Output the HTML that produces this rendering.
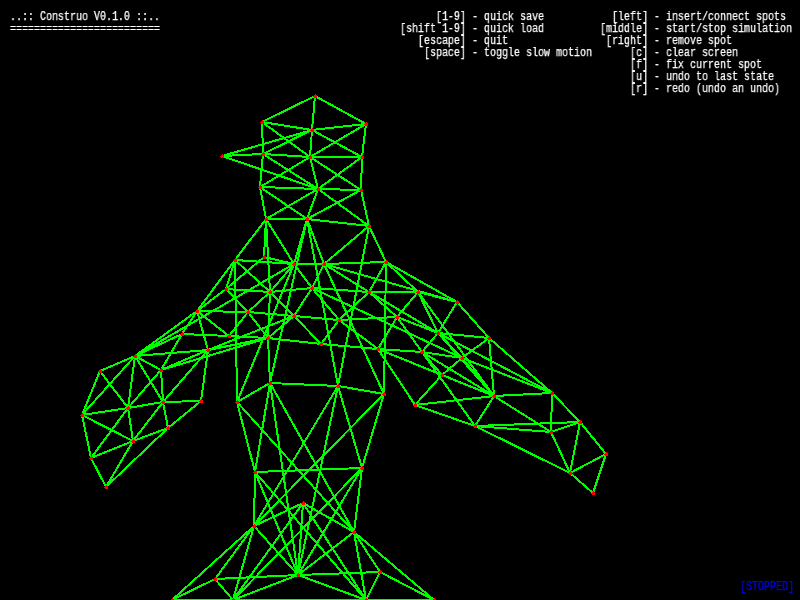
<!DOCTYPE html>
<html><head><meta charset="utf-8"><title>Construo</title>
<style>
html,body{margin:0;padding:0;background:#000;overflow:hidden}
body{width:800px;height:600px;position:relative;font-family:"Liberation Mono","DejaVu Sans Mono",monospace;font-size:12px;line-height:12px;color:#fff}
pre{margin:0;position:absolute;font:inherit;white-space:pre;letter-spacing:0;transform:scaleX(0.8333) translateZ(0);transform-origin:0 0;will-change:transform;-webkit-text-stroke:0.25px currentColor}
#title{left:10px;top:11px}
#help1{left:400px;top:11px}
#help2{left:600px;top:11px}
#status{left:740px;top:581px;color:#0000ff}
svg{position:absolute;left:0;top:0}
</style></head><body>
<svg width="800" height="600" viewBox="0 0 800 600" shape-rendering="crispEdges">
<g stroke="#0f0" stroke-width="2" fill="none"><line x1="315" y1="96" x2="262" y2="122"/><line x1="315" y1="96" x2="366" y2="124"/><line x1="315" y1="96" x2="312" y2="130"/><line x1="262" y1="122" x2="312" y2="130"/><line x1="262" y1="122" x2="310" y2="157"/><line x1="262" y1="122" x2="263" y2="154"/><line x1="366" y1="124" x2="312" y2="130"/><line x1="366" y1="124" x2="310" y2="157"/><line x1="366" y1="124" x2="362" y2="157"/><line x1="312" y1="130" x2="310" y2="157"/><line x1="312" y1="130" x2="263" y2="154"/><line x1="312" y1="130" x2="222" y2="156"/><line x1="312" y1="130" x2="362" y2="157"/><line x1="222" y1="156" x2="263" y2="154"/><line x1="222" y1="156" x2="318" y2="189"/><line x1="263" y1="154" x2="310" y2="157"/><line x1="263" y1="154" x2="260" y2="187"/><line x1="263" y1="154" x2="318" y2="189"/><line x1="310" y1="157" x2="362" y2="157"/><line x1="310" y1="157" x2="260" y2="187"/><line x1="310" y1="157" x2="318" y2="189"/><line x1="310" y1="157" x2="361" y2="190"/><line x1="362" y1="157" x2="318" y2="189"/><line x1="362" y1="157" x2="361" y2="190"/><line x1="260" y1="187" x2="318" y2="189"/><line x1="260" y1="187" x2="266" y2="219"/><line x1="260" y1="187" x2="307" y2="219"/><line x1="318" y1="189" x2="361" y2="190"/><line x1="318" y1="189" x2="266" y2="219"/><line x1="318" y1="189" x2="307" y2="219"/><line x1="318" y1="189" x2="369" y2="226"/><line x1="361" y1="190" x2="369" y2="226"/><line x1="361" y1="190" x2="307" y2="219"/><line x1="266" y1="219" x2="307" y2="219"/><line x1="307" y1="219" x2="369" y2="226"/><line x1="266" y1="219" x2="235" y2="260"/><line x1="266" y1="219" x2="264" y2="257"/><line x1="266" y1="219" x2="270" y2="292"/><line x1="266" y1="219" x2="294" y2="264"/><line x1="307" y1="219" x2="294" y2="264"/><line x1="307" y1="219" x2="324" y2="264"/><line x1="235" y1="260" x2="294" y2="264"/><line x1="264" y1="257" x2="294" y2="264"/><line x1="264" y1="257" x2="226" y2="289"/><line x1="235" y1="260" x2="226" y2="289"/><line x1="235" y1="260" x2="237" y2="402"/><line x1="235" y1="260" x2="270" y2="292"/><line x1="270" y1="292" x2="294" y2="316"/><line x1="235" y1="260" x2="197" y2="311"/><line x1="294" y1="264" x2="270" y2="292"/><line x1="294" y1="264" x2="135" y2="356"/><line x1="270" y1="292" x2="248" y2="312"/><line x1="226" y1="289" x2="270" y2="292"/><line x1="226" y1="289" x2="248" y2="312"/><line x1="226" y1="289" x2="197" y2="311"/><line x1="197" y1="311" x2="248" y2="312"/><line x1="197" y1="311" x2="229" y2="336"/><line x1="197" y1="311" x2="208" y2="350"/><line x1="197" y1="311" x2="182" y2="334"/><line x1="197" y1="311" x2="135" y2="356"/><line x1="182" y1="334" x2="229" y2="336"/><line x1="182" y1="334" x2="135" y2="356"/><line x1="182" y1="334" x2="161" y2="370"/><line x1="248" y1="312" x2="229" y2="336"/><line x1="208" y1="350" x2="135" y2="356"/><line x1="135" y1="356" x2="100" y2="371"/><line x1="135" y1="356" x2="161" y2="370"/><line x1="135" y1="356" x2="128" y2="408"/><line x1="135" y1="356" x2="163" y2="402"/><line x1="135" y1="356" x2="82" y2="415"/><line x1="100" y1="371" x2="82" y2="415"/><line x1="100" y1="371" x2="128" y2="408"/><line x1="161" y1="370" x2="163" y2="402"/><line x1="161" y1="370" x2="128" y2="408"/><line x1="163" y1="402" x2="201" y2="401"/><line x1="163" y1="402" x2="128" y2="408"/><line x1="163" y1="402" x2="168" y2="428"/><line x1="163" y1="402" x2="133" y2="441"/><line x1="201" y1="401" x2="168" y2="428"/><line x1="168" y1="428" x2="106" y2="487"/><line x1="128" y1="408" x2="82" y2="415"/><line x1="128" y1="408" x2="133" y2="441"/><line x1="128" y1="408" x2="91" y2="458"/><line x1="82" y1="415" x2="91" y2="458"/><line x1="82" y1="415" x2="133" y2="441"/><line x1="133" y1="441" x2="91" y2="458"/><line x1="133" y1="441" x2="106" y2="487"/><line x1="133" y1="441" x2="168" y2="428"/><line x1="91" y1="458" x2="106" y2="487"/><line x1="208" y1="350" x2="163" y2="402"/><line x1="208" y1="350" x2="201" y2="401"/><line x1="494" y1="396" x2="552" y2="393"/><line x1="494" y1="396" x2="475" y2="426"/><line x1="494" y1="396" x2="551" y2="432"/><line x1="552" y1="393" x2="551" y2="432"/><line x1="552" y1="393" x2="580" y2="422"/><line x1="475" y1="426" x2="551" y2="432"/><line x1="475" y1="426" x2="580" y2="422"/><line x1="475" y1="426" x2="570" y2="473"/><line x1="551" y1="432" x2="580" y2="422"/><line x1="551" y1="432" x2="570" y2="473"/><line x1="580" y1="422" x2="570" y2="473"/><line x1="580" y1="422" x2="606" y2="454"/><line x1="606" y1="454" x2="570" y2="473"/><line x1="606" y1="454" x2="593" y2="493"/><line x1="570" y1="473" x2="593" y2="493"/><line x1="172" y1="600" x2="434" y2="600"/><line x1="208" y1="350" x2="294" y2="316"/><line x1="237" y1="402" x2="255" y2="472"/><line x1="237" y1="402" x2="354" y2="532"/><line x1="270" y1="383" x2="255" y2="472"/><line x1="270" y1="383" x2="298" y2="575"/><line x1="270" y1="383" x2="354" y2="532"/><line x1="338" y1="386" x2="254" y2="526"/><line x1="255" y1="472" x2="362" y2="468"/><line x1="255" y1="472" x2="254" y2="526"/><line x1="255" y1="472" x2="298" y2="575"/><line x1="255" y1="472" x2="366" y2="600"/><line x1="384" y1="394" x2="254" y2="526"/><line x1="338" y1="386" x2="298" y2="575"/><line x1="338" y1="386" x2="362" y2="468"/><line x1="384" y1="394" x2="362" y2="468"/><line x1="362" y1="468" x2="354" y2="532"/><line x1="362" y1="468" x2="233" y2="600"/><line x1="362" y1="468" x2="298" y2="575"/><line x1="303" y1="503" x2="254" y2="526"/><line x1="303" y1="503" x2="298" y2="575"/><line x1="303" y1="503" x2="233" y2="600"/><line x1="303" y1="503" x2="354" y2="532"/><line x1="303" y1="503" x2="366" y2="600"/><line x1="254" y1="526" x2="298" y2="575"/><line x1="254" y1="526" x2="172" y2="600"/><line x1="254" y1="526" x2="215" y2="579"/><line x1="254" y1="526" x2="233" y2="600"/><line x1="215" y1="579" x2="172" y2="600"/><line x1="215" y1="579" x2="233" y2="600"/><line x1="215" y1="579" x2="298" y2="575"/><line x1="233" y1="600" x2="298" y2="575"/><line x1="354" y1="532" x2="298" y2="575"/><line x1="298" y1="575" x2="380" y2="572"/><line x1="298" y1="575" x2="366" y2="600"/><line x1="354" y1="532" x2="434" y2="600"/><line x1="354" y1="532" x2="380" y2="572"/><line x1="354" y1="532" x2="366" y2="600"/><line x1="380" y1="572" x2="434" y2="600"/><line x1="380" y1="572" x2="366" y2="600"/><line x1="270" y1="292" x2="268" y2="338"/><line x1="248" y1="312" x2="294" y2="316"/><line x1="248" y1="312" x2="268" y2="338"/><line x1="294" y1="316" x2="268" y2="338"/><line x1="294" y1="316" x2="321" y2="344"/><line x1="268" y1="338" x2="321" y2="344"/><line x1="268" y1="338" x2="270" y2="383"/><line x1="307" y1="219" x2="270" y2="383"/><line x1="270" y1="383" x2="338" y2="386"/><line x1="270" y1="383" x2="237" y2="402"/><line x1="321" y1="344" x2="378" y2="349"/><line x1="338" y1="386" x2="384" y2="394"/><line x1="161" y1="370" x2="208" y2="350"/><line x1="161" y1="370" x2="268" y2="338"/><line x1="294" y1="264" x2="237" y2="402"/><line x1="229" y1="336" x2="268" y2="338"/><line x1="208" y1="350" x2="268" y2="338"/><line x1="489" y1="338" x2="494" y2="396"/><line x1="489" y1="338" x2="462" y2="358"/><line x1="489" y1="338" x2="552" y2="393"/><line x1="462" y1="358" x2="494" y2="396"/><line x1="438" y1="333" x2="494" y2="396"/><line x1="438" y1="333" x2="552" y2="393"/><line x1="462" y1="358" x2="552" y2="393"/><line x1="442" y1="375" x2="415" y2="405"/><line x1="422" y1="352" x2="475" y2="426"/><line x1="442" y1="375" x2="494" y2="396"/><line x1="418" y1="292" x2="494" y2="396"/><line x1="415" y1="405" x2="494" y2="396"/><line x1="415" y1="405" x2="475" y2="426"/><line x1="378" y1="349" x2="494" y2="396"/><line x1="422" y1="352" x2="494" y2="396"/><line x1="312" y1="288" x2="462" y2="358"/><line x1="397" y1="317" x2="378" y2="349"/><line x1="397" y1="317" x2="438" y2="333"/><line x1="397" y1="317" x2="422" y2="352"/><line x1="438" y1="333" x2="422" y2="352"/><line x1="438" y1="333" x2="462" y2="358"/><line x1="438" y1="333" x2="489" y2="338"/><line x1="378" y1="349" x2="422" y2="352"/><line x1="339" y1="320" x2="378" y2="349"/><line x1="378" y1="349" x2="415" y2="405"/><line x1="378" y1="349" x2="442" y2="375"/><line x1="422" y1="352" x2="462" y2="358"/><line x1="422" y1="352" x2="442" y2="375"/><line x1="462" y1="358" x2="442" y2="375"/><line x1="294" y1="264" x2="324" y2="264"/><line x1="324" y1="264" x2="386" y2="262"/><line x1="369" y1="226" x2="324" y2="264"/><line x1="369" y1="226" x2="386" y2="262"/><line x1="369" y1="226" x2="338" y2="386"/><line x1="324" y1="264" x2="312" y2="288"/><line x1="294" y1="264" x2="312" y2="288"/><line x1="312" y1="288" x2="294" y2="316"/><line x1="270" y1="292" x2="312" y2="288"/><line x1="312" y1="288" x2="369" y2="292"/><line x1="312" y1="288" x2="339" y2="320"/><line x1="324" y1="264" x2="369" y2="292"/><line x1="369" y1="292" x2="438" y2="333"/><line x1="369" y1="292" x2="397" y2="317"/><line x1="369" y1="292" x2="418" y2="292"/><line x1="386" y1="262" x2="369" y2="292"/><line x1="369" y1="292" x2="339" y2="320"/><line x1="339" y1="320" x2="321" y2="344"/><line x1="386" y1="262" x2="384" y2="394"/><line x1="294" y1="316" x2="339" y2="320"/><line x1="339" y1="320" x2="397" y2="317"/><line x1="324" y1="264" x2="384" y2="394"/><line x1="324" y1="264" x2="457" y2="302"/><line x1="386" y1="262" x2="418" y2="292"/><line x1="386" y1="262" x2="457" y2="302"/><line x1="418" y1="292" x2="457" y2="302"/><line x1="457" y1="302" x2="489" y2="338"/><line x1="418" y1="292" x2="397" y2="317"/><line x1="418" y1="292" x2="438" y2="333"/><line x1="457" y1="302" x2="438" y2="333"/><line x1="307" y1="219" x2="338" y2="386"/></g>
<g fill="#f00"><path d="M315 94h1v1h1v3h-3v-1h-1v-1h1v-1h1z"/><path d="M262 120h1v1h1v3h-3v-1h-1v-1h1v-1h1z"/><path d="M366 122h1v1h1v3h-3v-1h-1v-1h1v-1h1z"/><path d="M312 128h1v1h1v3h-3v-1h-1v-1h1v-1h1z"/><path d="M222 154h1v1h1v3h-3v-1h-1v-1h1v-1h1z"/><path d="M263 152h1v1h1v3h-3v-1h-1v-1h1v-1h1z"/><path d="M310 155h1v1h1v3h-3v-1h-1v-1h1v-1h1z"/><path d="M362 155h1v1h1v3h-3v-1h-1v-1h1v-1h1z"/><path d="M260 185h1v1h1v3h-3v-1h-1v-1h1v-1h1z"/><path d="M318 187h1v1h1v3h-3v-1h-1v-1h1v-1h1z"/><path d="M361 188h1v1h1v3h-3v-1h-1v-1h1v-1h1z"/><path d="M266 217h1v1h1v3h-3v-1h-1v-1h1v-1h1z"/><path d="M307 217h1v1h1v3h-3v-1h-1v-1h1v-1h1z"/><path d="M369 224h1v1h1v3h-3v-1h-1v-1h1v-1h1z"/><path d="M235 258h1v1h1v3h-3v-1h-1v-1h1v-1h1z"/><path d="M264 255h1v1h1v3h-3v-1h-1v-1h1v-1h1z"/><path d="M294 262h1v1h1v3h-3v-1h-1v-1h1v-1h1z"/><path d="M324 262h1v1h1v3h-3v-1h-1v-1h1v-1h1z"/><path d="M386 260h1v1h1v3h-3v-1h-1v-1h1v-1h1z"/><path d="M226 287h1v1h1v3h-3v-1h-1v-1h1v-1h1z"/><path d="M270 290h1v1h1v3h-3v-1h-1v-1h1v-1h1z"/><path d="M312 286h1v1h1v3h-3v-1h-1v-1h1v-1h1z"/><path d="M369 290h1v1h1v3h-3v-1h-1v-1h1v-1h1z"/><path d="M248 310h1v1h1v3h-3v-1h-1v-1h1v-1h1z"/><path d="M294 314h1v1h1v3h-3v-1h-1v-1h1v-1h1z"/><path d="M339 318h1v1h1v3h-3v-1h-1v-1h1v-1h1z"/><path d="M397 315h1v1h1v3h-3v-1h-1v-1h1v-1h1z"/><path d="M229 334h1v1h1v3h-3v-1h-1v-1h1v-1h1z"/><path d="M268 336h1v1h1v3h-3v-1h-1v-1h1v-1h1z"/><path d="M321 342h1v1h1v3h-3v-1h-1v-1h1v-1h1z"/><path d="M208 348h1v1h1v3h-3v-1h-1v-1h1v-1h1z"/><path d="M378 347h1v1h1v3h-3v-1h-1v-1h1v-1h1z"/><path d="M270 381h1v1h1v3h-3v-1h-1v-1h1v-1h1z"/><path d="M338 384h1v1h1v3h-3v-1h-1v-1h1v-1h1z"/><path d="M384 392h1v1h1v3h-3v-1h-1v-1h1v-1h1z"/><path d="M237 400h1v1h1v3h-3v-1h-1v-1h1v-1h1z"/><path d="M255 470h1v1h1v3h-3v-1h-1v-1h1v-1h1z"/><path d="M362 466h1v1h1v3h-3v-1h-1v-1h1v-1h1z"/><path d="M303 501h1v1h1v3h-3v-1h-1v-1h1v-1h1z"/><path d="M254 524h1v1h1v3h-3v-1h-1v-1h1v-1h1z"/><path d="M354 530h1v1h1v3h-3v-1h-1v-1h1v-1h1z"/><path d="M298 573h1v1h1v3h-3v-1h-1v-1h1v-1h1z"/><path d="M215 577h1v1h1v3h-3v-1h-1v-1h1v-1h1z"/><path d="M380 570h1v1h1v3h-3v-1h-1v-1h1v-1h1z"/><path d="M233 598h1v1h1v3h-3v-1h-1v-1h1v-1h1z"/><path d="M366 598h1v1h1v3h-3v-1h-1v-1h1v-1h1z"/><path d="M172 598h1v1h1v3h-3v-1h-1v-1h1v-1h1z"/><path d="M434 598h1v1h1v3h-3v-1h-1v-1h1v-1h1z"/><path d="M197 309h1v1h1v3h-3v-1h-1v-1h1v-1h1z"/><path d="M182 332h1v1h1v3h-3v-1h-1v-1h1v-1h1z"/><path d="M135 354h1v1h1v3h-3v-1h-1v-1h1v-1h1z"/><path d="M100 369h1v1h1v3h-3v-1h-1v-1h1v-1h1z"/><path d="M161 368h1v1h1v3h-3v-1h-1v-1h1v-1h1z"/><path d="M163 400h1v1h1v3h-3v-1h-1v-1h1v-1h1z"/><path d="M201 399h1v1h1v3h-3v-1h-1v-1h1v-1h1z"/><path d="M128 406h1v1h1v3h-3v-1h-1v-1h1v-1h1z"/><path d="M82 413h1v1h1v3h-3v-1h-1v-1h1v-1h1z"/><path d="M168 426h1v1h1v3h-3v-1h-1v-1h1v-1h1z"/><path d="M133 439h1v1h1v3h-3v-1h-1v-1h1v-1h1z"/><path d="M91 456h1v1h1v3h-3v-1h-1v-1h1v-1h1z"/><path d="M106 485h1v1h1v3h-3v-1h-1v-1h1v-1h1z"/><path d="M418 290h1v1h1v3h-3v-1h-1v-1h1v-1h1z"/><path d="M457 300h1v1h1v3h-3v-1h-1v-1h1v-1h1z"/><path d="M438 331h1v1h1v3h-3v-1h-1v-1h1v-1h1z"/><path d="M489 336h1v1h1v3h-3v-1h-1v-1h1v-1h1z"/><path d="M422 350h1v1h1v3h-3v-1h-1v-1h1v-1h1z"/><path d="M462 356h1v1h1v3h-3v-1h-1v-1h1v-1h1z"/><path d="M442 373h1v1h1v3h-3v-1h-1v-1h1v-1h1z"/><path d="M415 403h1v1h1v3h-3v-1h-1v-1h1v-1h1z"/><path d="M494 394h1v1h1v3h-3v-1h-1v-1h1v-1h1z"/><path d="M552 391h1v1h1v3h-3v-1h-1v-1h1v-1h1z"/><path d="M475 424h1v1h1v3h-3v-1h-1v-1h1v-1h1z"/><path d="M551 430h1v1h1v3h-3v-1h-1v-1h1v-1h1z"/><path d="M580 420h1v1h1v3h-3v-1h-1v-1h1v-1h1z"/><path d="M606 452h1v1h1v3h-3v-1h-1v-1h1v-1h1z"/><path d="M570 471h1v1h1v3h-3v-1h-1v-1h1v-1h1z"/><path d="M593 491h1v1h1v3h-3v-1h-1v-1h1v-1h1z"/></g>
</svg>
<pre id="title">..:: Construo V0.1.0 ::..
=========================</pre>
<pre id="help1">      [1-9] - quick save
[shift 1-9] - quick load
   [escape] - quit
    [space] - toggle slow motion</pre>
<pre id="help2">  [left] - insert/connect spots
[middle] - start/stop simulation
 [right] - remove spot
     [c] - clear screen
     [f] - fix current spot
     [u] - undo to last state
     [r] - redo (undo an undo)</pre>
<pre id="status">[STOPPED]</pre>
</body></html>
